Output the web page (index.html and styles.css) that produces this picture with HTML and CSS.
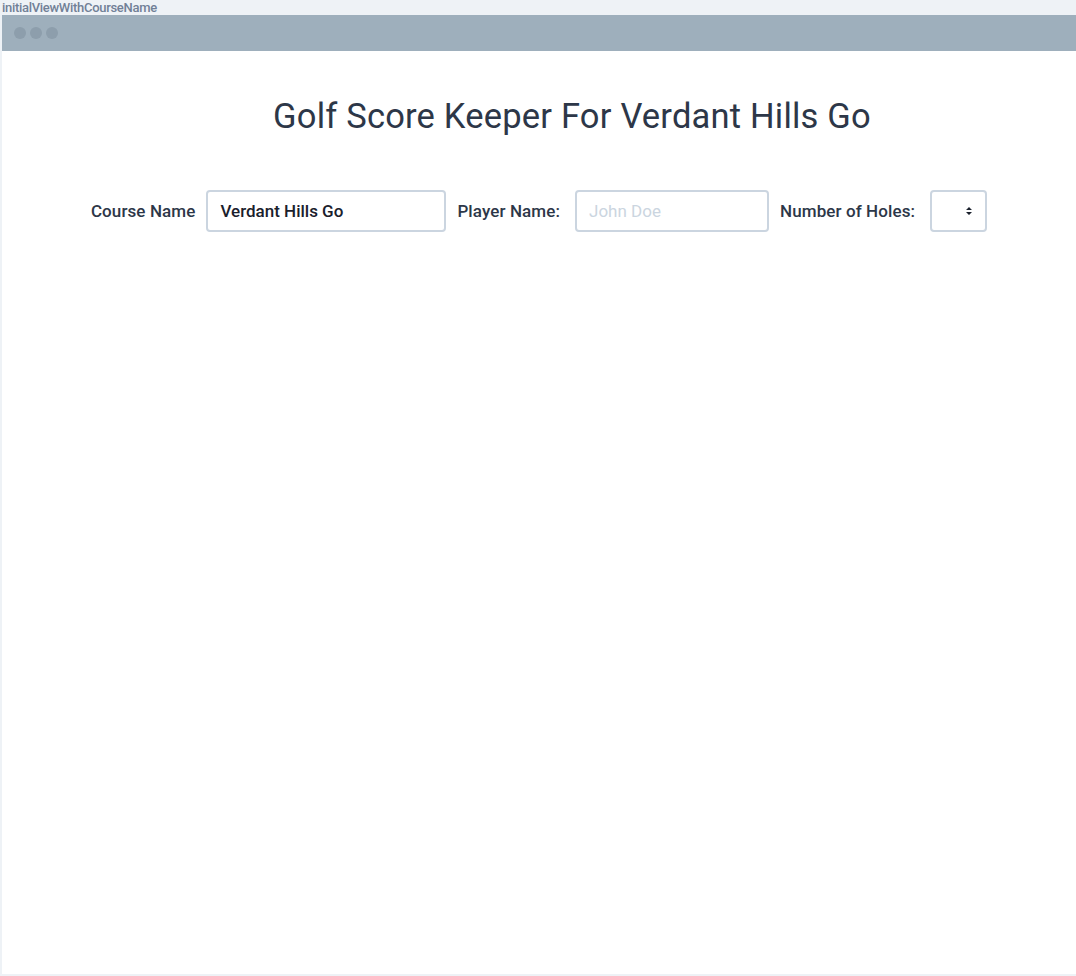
FILE: index.html
```html
<!DOCTYPE html>
<html>
<head>
<meta charset="utf-8">
<link rel="stylesheet" href="styles.css">
</head>
<body>
<div class="caption">initialViewWithCourseName</div>
<div class="window">
  <div class="titlebar">
    <span class="dot"></span><span class="dot"></span><span class="dot"></span>
  </div>
  <div class="content">
    <h1 class="title">Golf Score Keeper For Verdant Hills Go</h1>
    <form class="form-row">
      <label class="label" for="course">Course Name</label>
      <input class="field field-course" id="course" type="text" value="Verdant Hills Go">
      <label class="label label-colon" for="player">Player Name:</label>
      <input class="field field-player" id="player" type="text" placeholder="John Doe">
      <label class="label label-colon" for="holes">Number of Holes:</label>
      <div class="select">
        <svg class="select-arrows" width="8" height="10" viewBox="0 0 8 10"><path d="M4 1 L7 4 H1 Z M4 9 L7 6 H1 Z" fill="#1a202c"/></svg>
      </div>
    </form>
  </div>
</div>
</body>
</html>
```
FILE: styles.css
```css
* { box-sizing: border-box; }
html, body { margin: 0; padding: 0; }
body {
  background: #eef2f6;
  font-family: "Roboto", "Noto Sans", sans-serif;
  color: #2d3748;
  width: 1076px;
  height: 976px;
  overflow: hidden;
}
.caption {
  height: 15px;
  font-size: 13px;
  line-height: 15px;
  font-weight: 500;
  color: #718096;
  padding-left: 2px;
  letter-spacing: -0.3px;
}
.window {
  margin-left: 2px;
  height: 959px;
  background: #fff;
  display: flex;
  flex-direction: column;
}
.titlebar {
  height: 36px;
  background: #9eafbc;
  display: flex;
  align-items: center;
  gap: 4px;
  padding-left: 12px;
  padding-bottom: 1px;
}
.dot {
  width: 12px;
  height: 12px;
  border-radius: 50%;
  background: #8d9eac;
}
.content {
  flex: 1;
  display: flex;
  flex-direction: column;
  align-items: center;
}
.title {
  margin: 45px 0 0 66px;
  font-size: 34.5px;
  font-weight: 400;
  line-height: 40px;
  color: #2d3748;
  letter-spacing: 0.2px;
}
.form-row {
  margin-top: 54px;
  display: flex;
  align-items: center;
  gap: 11px;
}
.label {
  font-size: 17px;
  font-weight: 500;
  color: #2d3748;
  letter-spacing: 0.1px;
}
.label-colon { margin-right: 4px; }
.field {
  height: 42px;
  border: 2px solid #cbd5e0;
  border-radius: 4px;
  padding: 0 12px;
  font-family: inherit;
  font-size: 17px;
  font-weight: 500;
  color: #1a202c;
  background: #fff;
  outline: none;
}
.field::placeholder { color: #cbd5e0; font-weight: 400; }
.field-course { width: 240px; }
.field-player { width: 194px; }
.select {
  width: 57px;
  height: 42px;
  border: 2px solid #cbd5e0;
  border-radius: 4px;
  display: flex;
  align-items: center;
  justify-content: flex-end;
  padding-right: 12px;
}
.select-arrows { display: block; }
```
